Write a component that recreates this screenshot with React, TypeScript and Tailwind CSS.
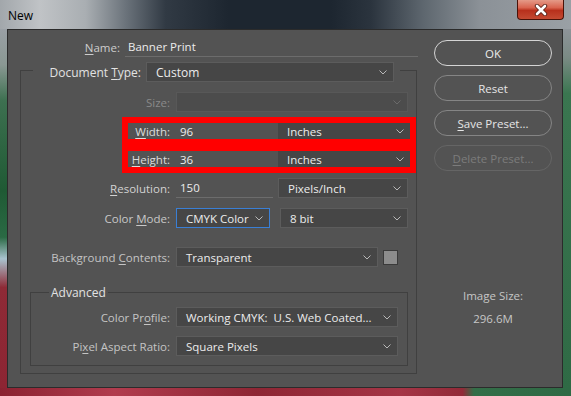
import React from "react";

function Chevron({ dim = false }: { dim?: boolean }) {
  return (
    <svg width="8" height="5" viewBox="0 0 8 5" className="shrink-0">
      <path d="M0.5 0.5 L4 4 L7.5 0.5" fill="none" stroke={dim ? "#6a6a6a" : "#b8b8b8"} strokeWidth="1" />
    </svg>
  );
}

function Select({
  text,
  className = "",
  disabled = false,
}: {
  text?: string;
  className?: string;
  disabled?: boolean;
}) {
  return (
    <div
      className={`flex items-center justify-between pl-[9px] pr-[6px] border ${
        disabled ? "border-[#585858] bg-[#4c4c4c]" : "border-[#5c5c5c] bg-[#464646]"
      } ${className}`}
    >
      <span className="text-[#ececec] whitespace-pre">{text}</span>
      <Chevron dim={disabled} />
    </div>
  );
}

function U({ children }: { children: React.ReactNode }) {
  return <span className="underline underline-offset-2 decoration-1">{children}</span>;
}

function Label({ className = "", children }: { className?: string; children: React.ReactNode }) {
  return <div className={`shrink-0 text-right whitespace-nowrap ${className}`}>{children}</div>;
}

function Button({ children, kind }: { children: React.ReactNode; kind: "ok" | "norm" | "dis" }) {
  const cls =
    kind === "ok"
      ? "border-[#d4d4d4] text-[#ececec]"
      : kind === "norm"
      ? "border-[#858585] text-[#e6e6e6]"
      : "border-[#656565] text-[#7c7c7c]";
  return (
    <div className={`h-[26px] w-[118px] rounded-full border flex items-center justify-center ${cls}`}>
      {children}
    </div>
  );
}

export default function App() {
  return (
    <div className="w-[571px] h-[396px] flex flex-col overflow-hidden font-['Open_Sans','Noto_Sans',sans-serif] text-[11.5px] leading-[17px] bg-[#222]">
      {/* Title bar */}
      <div className="h-[29px] shrink-0 flex items-start justify-between bg-[linear-gradient(to_right,#a2a7ab_0%,#c0c3c6_7%,#a9aeb2_15%,#6b737b_22%,#313a44_29%,#1d2630_40%,#1d2630_58%,#2b343e_65%,#5d666e_74%,#8b9197_84%,#9aa0a5_100%)]">
        <span className="ml-[8px] mt-[7px] text-[12px] text-black">New</span>
        <div className="mr-[7px] w-[47px] h-[20px] rounded-b-[4px] border border-t-0 border-[#4a1208] flex items-center justify-center bg-[linear-gradient(to_bottom,#e49a88_0%,#d9644f_40%,#b8301c_55%,#c44a32_100%)]">
          <svg width="14" height="12" viewBox="0 0 14 12">
            <path d="M3 2 L11 10 M11 2 L3 10" stroke="#5a2218" strokeWidth="4.4" strokeLinecap="round" />
            <path d="M3 2 L11 10 M11 2 L3 10" stroke="#ffffff" strokeWidth="2.6" strokeLinecap="round" />
          </svg>
        </div>
      </div>

      <div className="flex h-[359px] shrink-0">
        {/* left frame */}
        <div className="w-[7px] bg-[linear-gradient(to_bottom,#9aa0a5_0%,#8a9893_10%,#3d7050_20%,#1f5a34_45%,#2a6a44_58%,#a9c3cf_64%,#8e2a36_72%,#8d2533_100%)]" />

        {/* content */}
        <div className="w-[556px] h-[359px] bg-[#535353] border border-[#2b2b2b] flex text-[#d6d6d6]">
          {/* left column */}
          <div className="w-[410px] pt-[7px] flex flex-col">
            {/* Name */}
            <div className="flex items-center h-[20px]">
              <Label className="w-[112px] text-[#cdcdcd]">
                <U>N</U>ame:
              </Label>
              <div className="ml-[5px] w-[293px] h-[20px] border-b border-[#6c6c6c] pl-[3px] flex items-center text-[#ececec]">
                Banner Print
              </div>
            </div>

            <fieldset className="ml-[12px] mt-[2px] w-[397px] border border-[#404040] pb-[7px]">
              <legend className="ml-[12px] pt-[3px]">
                <div className="flex items-center">
                  <Label className="w-[108px] text-[#e2e2e2] text-[12px]">
                    Document <U>T</U>ype:
                  </Label>
                  <Select text="Custom" className="ml-[5px] w-[248px] h-[20px] text-[12px]" />
                  <div className="w-[6px]" />
                </div>
              </legend>

              {/* Size */}
              <div className="flex items-center h-[20px] mt-[10px]">
                <Label className="w-[149px] text-[#8a8a8a]">Size:</Label>
                <Select className="ml-[6px] w-[232px] h-[20px]" disabled />
              </div>

              {/* Width */}
              <div className="ml-[101px] mt-[5px] w-[294px] h-[28px] border-[6px] border-[#ff0000] flex items-center">
                <Label className="w-[42px] text-[#dcdcdc]">
                  <U>W</U>idth:
                </Label>
                <div className="ml-[6px] w-[97px] pl-[4px] text-[#ececec]">96</div>
                <Select text="Inches" className="ml-[5px] w-[132px] h-[16px] border-0 bg-[#454545]" />
              </div>
              {/* Height */}
              <div className="ml-[101px] w-[294px] h-[28px] border-[6px] border-[#ff0000] flex items-center">
                <Label className="w-[42px] text-[#dcdcdc]">
                  <U>H</U>eight:
                </Label>
                <div className="ml-[6px] w-[97px] pl-[4px] text-[#ececec]">36</div>
                <Select text="Inches" className="ml-[5px] w-[132px] h-[16px] border-0 bg-[#454545]" />
              </div>

              {/* Resolution */}
              <div className="flex items-center h-[20px] mt-[5px]">
                <Label className="w-[149px] text-[#d2d2d2]">
                  <U>R</U>esolution:
                </Label>
                <div className="ml-[6px] w-[97px] h-[20px] border-b border-[#6c6c6c] pl-[4px] flex items-center text-[#ececec]">
                  150
                </div>
                <Select text="Pixels/Inch" className="ml-[5px] w-[130px] h-[20px]" />
              </div>

              {/* Color Mode */}
              <div className="flex items-center h-[20px] mt-[10px]">
                <Label className="w-[149px] text-[#c8c8c8]">
                  Color <U>M</U>ode:
                </Label>
                <Select text="CMYK Color" className="ml-[6px] w-[94px] h-[20px] !border-[#3a7fd5]" />
                <Select text="8 bit" className="ml-[10px] w-[128px] h-[20px]" />
              </div>

              {/* Background */}
              <div className="flex items-center h-[20px] mt-[19px]">
                <Label className="w-[149px] text-[#c4c4c4]">
                  Background <U>C</U>ontents:
                </Label>
                <Select text="Transparent" className="ml-[6px] w-[202px] h-[20px]" />
                <div className="ml-[5px] w-[15px] h-[15px] bg-[#8c8c8c] border border-[#3a3a3a]" />
              </div>

              {/* Advanced */}
              <fieldset className="ml-[9px] mt-[17px] w-[378px] border border-[#404040] pb-[9px]">
                <legend className="ml-[18px] px-[2px] text-[#e2e2e2] text-[12px]">Advanced</legend>
                <div className="flex items-center h-[20px] mt-[6px]">
                  <Label className="w-[139px] text-[#c4c4c4]">
                    Color Pr<U>o</U>file:
                  </Label>
                  <Select text="Working CMYK:  U.S. Web Coated..." className="ml-[6px] w-[222px] h-[20px]" />
                </div>
                <div className="flex items-center h-[20px] mt-[9px]">
                  <Label className="w-[139px] text-[#c4c4c4]">
                    Pi<U>x</U>el Aspect Ratio:
                  </Label>
                  <Select text="Square Pixels" className="ml-[6px] w-[222px] h-[20px]" />
                </div>
              </fieldset>
            </fieldset>
          </div>

          {/* right column */}
          <div className="ml-[16px] w-[118px] pt-[10px] flex flex-col">
            <div className="flex flex-col gap-[9px]">
              <Button kind="ok">OK</Button>
              <Button kind="norm">Reset</Button>
              <Button kind="norm">
                <span>
                  <U>S</U>ave Preset...
                </span>
              </Button>
              <Button kind="dis">
                <span>
                  <U>D</U>elete Preset...
                </span>
              </Button>
            </div>
            <div className="mt-[116px] text-center text-[#c6c6c6]">Image Size:</div>
            <div className="mt-[6px] text-center text-[#c6c6c6]">296.6M</div>
          </div>
        </div>

        {/* right frame */}
        <div className="w-[8px] bg-[linear-gradient(to_bottom,#8e9499_0%,#7a8a84_8%,#3a7650_18%,#2f6a45_100%)]" />
      </div>

      {/* bottom frame */}
      <div className="h-[8px] shrink-0 bg-[linear-gradient(to_right,#8a2231_0%,#b13c4e_20%,#8e2634_45%,#a53546_70%,#922a38_81%,#336e48_83%,#2f6a45_100%)]" />
    </div>
  );
}
